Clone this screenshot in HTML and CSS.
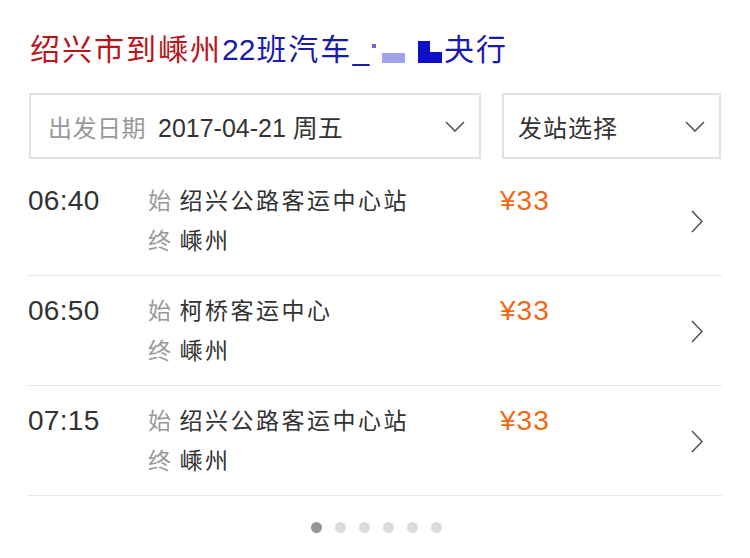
FILE: index.html
```html
<!DOCTYPE html>
<html lang="zh">
<head>
<meta charset="utf-8">
<link rel="stylesheet" href="styles.css">
</head>
<body>
<div class="page">
  <h1 class="title"><span class="t-red">绍兴市到嵊州</span><span class="t-blue"><span class="t-num">22</span>班汽车<span class="t-num">_</span><span class="tick"></span><span class="blk-light"></span><span class="blk-dark"><i class="blk-a"></i><i class="blk-b"></i></span>夬行</span></h1>

  <div class="filters">
    <div class="select select-date">
      <span class="sel-label">出发日期</span>
      <span class="sel-value">2017-04-21 周五</span>
      <svg class="down" width="20" height="11" viewBox="0 0 20 11"><path d="M1 1 L10 10 L19 1" fill="none" stroke="#555" stroke-width="1.6"/></svg>
    </div>
    <div class="select select-station">
      <span class="sel-value">发站选择</span>
      <svg class="down" width="20" height="11" viewBox="0 0 20 11"><path d="M1 1 L10 10 L19 1" fill="none" stroke="#555" stroke-width="1.6"/></svg>
    </div>
  </div>

  <ul class="list">
    <li class="row">
      <div class="time">06:40</div>
      <div class="stops">
        <div class="stop"><span class="tag">始</span>绍兴公路客运中心站</div>
        <div class="stop"><span class="tag">终</span>嵊州</div>
      </div>
      <div class="price">¥33</div>
      <svg class="more" width="12" height="23" viewBox="0 0 12 23"><path d="M1 1 L11 11.5 L1 22" fill="none" stroke="#555" stroke-width="1.6"/></svg>
    </li>
    <li class="row">
      <div class="time">06:50</div>
      <div class="stops">
        <div class="stop"><span class="tag">始</span>柯桥客运中心</div>
        <div class="stop"><span class="tag">终</span>嵊州</div>
      </div>
      <div class="price">¥33</div>
      <svg class="more" width="12" height="23" viewBox="0 0 12 23"><path d="M1 1 L11 11.5 L1 22" fill="none" stroke="#555" stroke-width="1.6"/></svg>
    </li>
    <li class="row">
      <div class="time">07:15</div>
      <div class="stops">
        <div class="stop"><span class="tag">始</span>绍兴公路客运中心站</div>
        <div class="stop"><span class="tag">终</span>嵊州</div>
      </div>
      <div class="price">¥33</div>
      <svg class="more" width="12" height="23" viewBox="0 0 12 23"><path d="M1 1 L11 11.5 L1 22" fill="none" stroke="#555" stroke-width="1.6"/></svg>
    </li>
  </ul>

  <div class="dots">
    <span class="dot active"></span>
    <span class="dot"></span>
    <span class="dot"></span>
    <span class="dot"></span>
    <span class="dot"></span>
    <span class="dot"></span>
  </div>
</div>
</body>
</html>
```
FILE: styles.css
```css
* { box-sizing: border-box; }
html, body { margin: 0; padding: 0; background: #fff; }
body {
  font-family: "Liberation Sans", "Noto Sans CJK SC", sans-serif;
  color: #333;
  width: 750px;
  height: 558px;
  overflow: hidden;
}
.page { padding: 0 28px 0 28px; }

.title {
  margin: 30px 0 0 2px;
  height: 40px;
  line-height: 40px;
  font-size: 30px;
  font-weight: normal;
  letter-spacing: 2px;
  white-space: nowrap;
}
.t-red { color: #b8161b; }
.t-blue { color: #1a1ab0; }
.t-num { letter-spacing: 0; margin-right: 1px; }
.tick {
  display: inline-block;
  width: 4px; height: 4px;
  background: #6a6ad0;
  margin: 0 4px 0 2px;
  vertical-align: 12px;
}
.blk-light {
  display: inline-block;
  width: 23px; height: 10px;
  background: #a3a3ea;
  margin: 0 13px 0 2px;
  vertical-align: -3px;
}
.blk-dark {
  display: inline-flex;
  align-items: flex-end;
  margin-right: 2px;
  vertical-align: -3px;
}
.blk-a { display: block; width: 12px; height: 22px; background: #0f0fc8; }
.blk-b { display: block; width: 12px; height: 11px; background: #0f0fc8; }

.filters {
  display: flex;
  gap: 21px;
  margin-top: 23px;
  margin-left: 1px;
}
.select {
  height: 66px;
  border: 2px solid #e2e2e2;
  display: flex;
  align-items: center;
  padding: 0 14px 0 17px;
  font-size: 24px;
}
.select-date { width: 452px; }
.select-station { width: 219px; padding-left: 14px; }
.sel-label {
  color: #999;
  letter-spacing: 0.5px;
  margin-right: 12px;
}
.sel-value { color: #333; flex: 1; white-space: nowrap; }
.select-date .sel-value { font-size: 25px; }
.select-station .sel-value { letter-spacing: 1px; }
.down { flex: none; }

.list { list-style: none; margin: 7px 0 0 0; padding: 0; }
.row {
  display: flex;
  align-items: flex-start;
  padding: 15px 0 14px 0;
  border-bottom: 1px solid #e6e6e6;
}
.time {
  width: 120px;
  font-size: 28px;
  line-height: 40px;
  color: #333;
  letter-spacing: 0.3px;
}
.stops { width: 352px; }
.stop {
  font-size: 23px;
  line-height: 40px;
  letter-spacing: 2.5px;
  color: #333;
  white-space: nowrap;
}
.tag { color: #999; margin-right: 6px; }
.price {
  flex: 1;
  font-size: 28px;
  line-height: 40px;
  color: #ef6a16;
  letter-spacing: 1px;
}
.more { align-self: center; margin-right: 19px; }

.dots {
  display: flex;
  justify-content: center;
  gap: 13px;
  margin-top: 26px;
  padding-left: 3px;
}
.dot {
  width: 11px; height: 11px;
  border-radius: 50%;
  background: #dcdcdc;
}
.dot.active { background: #959595; }
```
